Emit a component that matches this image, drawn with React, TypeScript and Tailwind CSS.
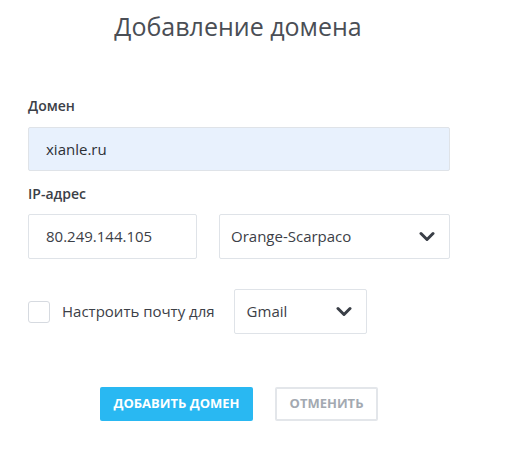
import React from "react";

const Chevron = () => (
  <svg width="16" height="11" viewBox="0 0 16 11" className="shrink-0">
    <path d="M2 2.5 L8 8.5 L14 2.5" fill="none" stroke="#3a3f47" strokeWidth="3" strokeLinecap="round" strokeLinejoin="round" />
  </svg>
);

export default function App() {
  return (
    <div className="w-[506px] h-[450px] bg-white" style={{ fontFamily: '"Open Sans", sans-serif' }}>
      <div className="ml-[28px] w-[422px] flex flex-col">
        <h1 className="mt-[6px] h-[40px] text-center text-[25px] leading-[40px] text-[#4a4e55] pr-[2px]">Добавление домена</h1>
        <div className="mt-[50px] text-[14px] font-semibold leading-[20px] text-[#3c4047]">Домен</div>
        <div className="mt-[11px] h-[44px] rounded-[2px] border border-[#dfe3e8] bg-[#e8f1fd] flex items-center px-[17px] text-[15px] text-[#2c3036]">
          xianle.ru
        </div>
        <div className="mt-[13px] text-[14px] font-semibold leading-[20px] text-[#3c4047]">IP-адрес</div>
        <div className="mt-[10px] flex gap-[22px]">
          <div className="w-[169px] h-[45px] border border-[#dfe3e8] rounded-[2px] flex items-center px-[17px] text-[15px] text-[#3c4047]">
            80.249.144.105
          </div>
          <div className="flex-1 h-[45px] border border-[#dfe3e8] rounded-[2px] flex items-center justify-between pl-[11px] pr-[14px] text-[15px] text-[#3c4047]">
            <span>Orange-Scarpaco</span>
            <Chevron />
          </div>
        </div>
        <div className="mt-[30px] flex items-center">
          <div className="w-[22px] h-[22px] rounded-[3px] border border-[#d6dae0] bg-white" />
          <span className="ml-[12px] text-[15px] text-[#3c4047]">Настроить почту для</span>
          <div className="ml-[19px] w-[133px] h-[45px] border border-[#dfe3e8] rounded-[2px] flex items-center justify-between pl-[12px] pr-[14px] text-[15px] text-[#3c4047]">
            <span>Gmail</span>
            <Chevron />
          </div>
        </div>
        <div className="mt-[53px] flex justify-center gap-[22px]">
          <button className="w-[153px] h-[34px] rounded-[2px] bg-[#29b8f2] text-white text-[13px] font-bold">
            ДОБАВИТЬ ДОМЕН
          </button>
          <button className="w-[103px] h-[34px] rounded-[2px] border-2 border-[#e3e6ea] bg-white text-[#a3a9b1] text-[13px] font-bold">
            ОТМЕНИТЬ
          </button>
        </div>
      </div>
    </div>
  );
}
